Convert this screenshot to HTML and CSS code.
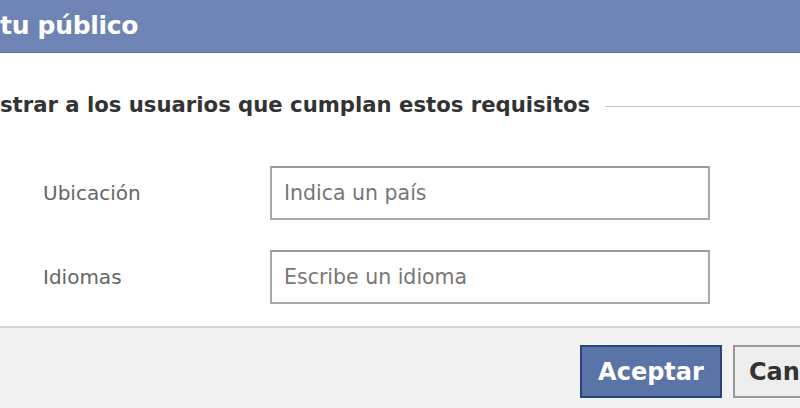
FILE: index.html
```html
<!DOCTYPE html>
<html lang="es">
<head>
<meta charset="utf-8">
<link rel="stylesheet" href="styles.css">
</head>
<body>
<div class="dialog">
  <div class="header"><span class="title">tu público</span></div>
  <div class="content">
    <div class="section-head">
      <span class="section-title">strar a los usuarios que cumplan estos requisitos</span>
      <span class="rule"></span>
    </div>
    <div class="form">
      <label class="label">Ubicación</label>
      <div class="input">Indica un país</div>
      <label class="label">Idiomas</label>
      <div class="input">Escribe un idioma</div>
    </div>
  </div>
  <div class="footer">
    <button class="btn btn-primary">Aceptar</button>
    <button class="btn btn-secondary">Cancelar</button>
  </div>
</div>
</body>
</html>
```
FILE: styles.css
```css
html, body {
  margin: 0;
  padding: 0;
  width: 800px;
  height: 408px;
  overflow: hidden;
  background: #fff;
  font-family: "DejaVu Sans", Verdana, sans-serif;
}
.dialog {
  display: flex;
  flex-direction: column;
  width: 800px;
  height: 408px;
}
.header {
  height: 53px;
  background: #6d84b4;
  border-bottom: 1px solid #5d74a4;
  display: flex;
  align-items: center;
  box-sizing: border-box;
}
.title {
  color: #fff;
  font-weight: bold;
  font-size: 25px;
  letter-spacing: -0.3px;
  margin-top: -2px;
}
.content {
  height: 273px;
  box-sizing: border-box;
  padding-top: 37px;
}
.section-head {
  display: flex;
  align-items: center;
  height: 28px;
}
.section-title {
  color: #333;
  font-weight: bold;
  font-size: 21.2px;
  white-space: nowrap;
}
.rule {
  flex: 1;
  height: 1px;
  background: #c8c8c8;
  margin-left: 15px;
  margin-top: 4px;
}
.form {
  display: grid;
  grid-template-columns: 227px 440px;
  grid-auto-rows: 54px;
  row-gap: 30px;
  padding-left: 43px;
  margin-top: 48px;
  align-items: center;
}
.label {
  color: #666;
  font-size: 20px;
}
.input {
  box-sizing: border-box;
  height: 54px;
  border: 2px solid #a9a9a9;
  border-top-color: #9a9a9a;
  display: flex;
  align-items: center;
  padding-left: 12px;
  color: #777;
  font-size: 20.5px;
}
.footer {
  flex: 1;
  background: #f2f2f2;
  border-top: 2px solid #d4d4d4;
  display: flex;
  justify-content: flex-start;
  align-items: flex-start;
  padding-top: 17px;
  padding-left: 580px;
  gap: 11px;
}
.btn {
  height: 53px;
  box-sizing: border-box;
  font-family: "DejaVu Sans", Verdana, sans-serif;
  font-weight: bold;
  font-size: 24px;
  padding: 0 14px;
  flex-shrink: 0;
}
.btn-primary {
  width: 142px;
  padding: 0;
  background: #5b74a8;
  border: 2px solid #29447e;
  color: #fff;
}
.btn-secondary {
  background: #eeeeee;
  border: 2px solid #999;
  color: #333;
}
```
